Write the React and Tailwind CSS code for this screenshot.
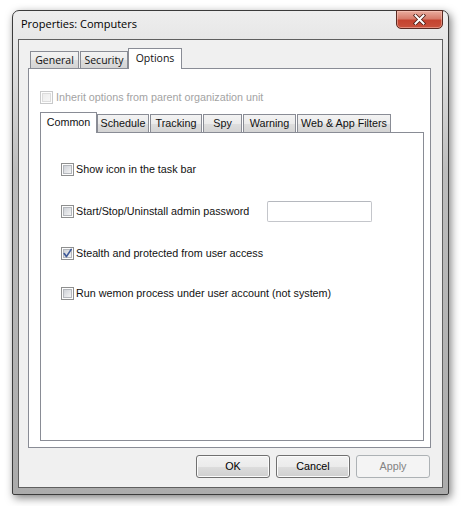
import React from 'react';

const TAB = 'border-[#898c95] bg-[linear-gradient(180deg,#f3f3f3_0%,#ebebeb_50%,#dedede_51%,#d4d4d4_100%)]';

function CheckBox({ checked = false, disabled = false, id }) {
  const from = disabled ? '#ececec' : '#cbcfd5';
  const to = disabled ? '#f7f7f7' : '#f6f6f6';
  return (
    <svg width="13" height="13" viewBox="0 0 13 13" className="flex-none block">
      <defs>
        <linearGradient id={id} x1="0" y1="0" x2="1" y2="1">
          <stop offset="0" stopColor={from} />
          <stop offset="1" stopColor={to} />
        </linearGradient>
      </defs>
      <rect x="0.5" y="0.5" width="12" height="12" fill="#fdfdfd" stroke={disabled ? '#c8c9ca' : '#8e8f8f'} />
      <rect x="2.5" y="2.5" width="8" height="8" fill={`url(#${id})`} stroke={disabled ? '#dcdcdc' : '#b4b7bc'} />
      {checked && (
        <path d="M3.2 6.6 L5.4 9.6 L10.2 2.4" fill="none" stroke="#3f5a98" strokeWidth="1.7" strokeLinecap="round" strokeLinejoin="round" />
      )}
    </svg>
  );
}

function Button({ children, disabled }) {
  return (
    <div
      className={`w-[74px] h-[23px] rounded-[3px] border flex items-center justify-center text-[10.75px] ${
        disabled
          ? 'border-[#adb2b5] bg-[#f4f4f4] text-[#838383]'
          : 'border-[#707070] text-black bg-[linear-gradient(180deg,#f2f2f2_0%,#ebebeb_50%,#dddddd_51%,#cfcfcf_100%)] shadow-[inset_0_0_0_1px_#fbfbfb]'
      }`}
    >
      {children}
    </div>
  );
}

export default function App() {
  const outerTabs = [
    { label: 'General', w: 'w-[49px]' },
    { label: 'Security', w: 'w-[48px] ml-px' },
  ];
  const innerTabs = [
    { label: 'Schedule', w: 'w-[52px]' },
    { label: 'Tracking', w: 'w-[52px] ml-px' },
    { label: 'Spy', w: 'w-[39px] ml-px' },
    { label: 'Warning', w: 'w-[53px] ml-px' },
    { label: 'Web & App Filters', w: 'w-[94px] ml-px' },
  ];

  return (
    <div className="w-[461px] h-[506px] bg-white pt-[10px] pl-[12px] font-['Liberation_Sans',Arial,sans-serif] text-[#111]">
      {/* Window frame */}
      <div className="w-[437px] h-[485px] rounded-t-[7px] rounded-b-[2px] border border-[#3b3b3b] bg-[linear-gradient(180deg,#eeeeee_0px,#e4e4e4_40px,#bdbdbd_160px,#ababab_100%)] shadow-[2px_3px_9px_rgba(0,0,0,0.5)] flex flex-col">
        {/* Title bar */}
        <div className="h-[28px] flex items-start justify-between">
          <span className="pl-[8px] pt-[6px] text-[11px] leading-[14px] font-['Open_Sans',sans-serif] text-black">
            Properties: Computers
          </span>
          <div className="-mt-px mr-[5px] w-[47px] h-[19px] rounded-b-[5px] border border-[#5a2a22] bg-[linear-gradient(180deg,#e9ad9f_0%,#d67c6b_45%,#c4432f_55%,#c9523c_100%)] shadow-[inset_0_0_0_1px_rgba(255,210,200,0.45)] flex items-center justify-center">
            <svg width="13" height="11" viewBox="0 0 13 11">
              <path d="M2.5 1.5 L10.5 9.5 M10.5 1.5 L2.5 9.5" stroke="#4a1a12" strokeWidth="3.6" strokeLinecap="square" />
              <path d="M2.5 1.5 L10.5 9.5 M10.5 1.5 L2.5 9.5" stroke="#ffffff" strokeWidth="2" strokeLinecap="square" />
            </svg>
          </div>
        </div>

        {/* Client area */}
        <div className="mx-[5px] h-[449px] border border-[#5f5f5f] bg-[#f0f0f0] flex flex-col">
          {/* Outer tabs */}
          <div className="ml-[9px] mt-[8px] h-[20px] pl-[2px] flex items-end relative z-10 font-['Open_Sans',sans-serif] text-[10.5px]">
            {outerTabs.map(t => (
              <div key={t.label} className={`${t.w} h-[17px] border border-b-0 ${TAB} flex items-center justify-center leading-none`}>
                {t.label}
              </div>
            ))}
            <div className="w-[54px] h-[21px] -mb-px border border-b-0 border-[#898c95] bg-white flex items-start justify-center pt-[3px] leading-[12px]">
              Options
            </div>
          </div>

          {/* Outer panel */}
          <div className="ml-[9px] w-[403px] h-[380px] border border-[#898c95] bg-white pl-[11px] pt-[22px]">
            <div className="h-[13px] flex items-center gap-[3px]">
              <CheckBox disabled id="cb-inherit" />
              <span className="text-[10.75px] leading-[13px] text-[#a3a3a3]">Inherit options from parent organization unit</span>
            </div>

            {/* Inner tabs */}
            <div className="mt-[8px] h-[20px] flex items-end relative z-10 text-[10.75px]">
              <div className="w-[57px] h-[21px] -mb-px border border-b-0 border-[#898c95] bg-white flex items-start justify-center pt-[3px] leading-[13px]">
                Common
              </div>
              {innerTabs.map(t => (
                <div key={t.label} className={`${t.w} h-[18px] border border-b-0 ${TAB} flex items-center justify-center leading-none`}>
                  {t.label}
                </div>
              ))}
            </div>

            {/* Inner panel */}
            <div className="w-[384px] h-[309px] border border-[#898c95] bg-white pl-[20px] pt-[30px] text-[10.75px] leading-[13px]">
              <div className="h-[13px] flex items-center gap-[2px]">
                <CheckBox id="cb-1" />
                <span>Show icon in the task bar</span>
              </div>
              <div className="mt-[29px] h-[13px] flex items-center gap-[2px]">
                <CheckBox id="cb-2" />
                <span className="w-[189px]">Start/Stop/Uninstall admin password</span>
                <div className="w-[105px] h-[21px] flex-none rounded-[2px] border border-[#c4c6cb] border-t-[#b5b8be] bg-white" />
              </div>
              <div className="mt-[29px] h-[13px] flex items-center gap-[2px]">
                <CheckBox checked id="cb-3" />
                <span>Stealth and protected from user access</span>
              </div>
              <div className="mt-[27px] h-[13px] flex items-center gap-[2px]">
                <CheckBox id="cb-4" />
                <span>Run wemon process under user account (not system)</span>
              </div>
            </div>
          </div>

          {/* Buttons */}
          <div className="mt-[7px] pr-[12px] flex justify-end gap-[6px]">
            <Button>OK</Button>
            <Button>Cancel</Button>
            <Button disabled>Apply</Button>
          </div>
        </div>
      </div>
    </div>
  );
}
